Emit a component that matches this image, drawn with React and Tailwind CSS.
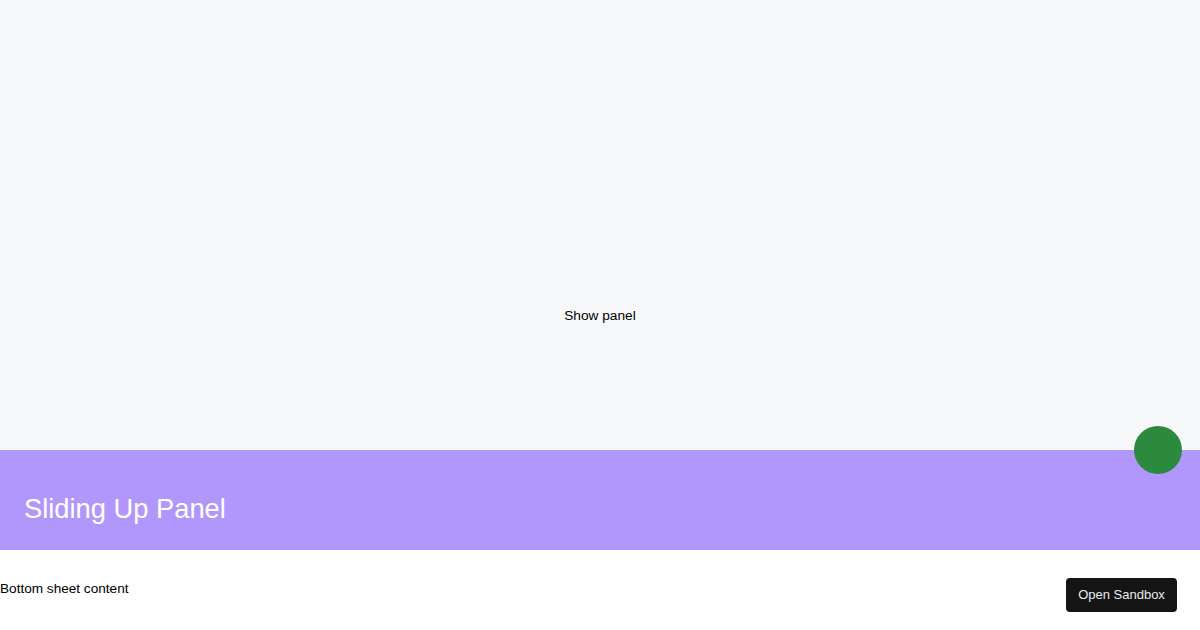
export default function App() {
  return (
    <div className="relative h-screen w-full overflow-hidden bg-[#f8f9fa] font-['Liberation_Sans',Arial,sans-serif] text-black">
      {/* main content */}
      <div className="flex h-full items-center justify-center">
        <button className="mt-[2px] text-[13.7px] leading-4">Show panel</button>
      </div>

      {/* sliding panel */}
      <div className="absolute inset-x-0 bottom-0 h-[180px] bg-white">
        <div className="relative flex h-[100px] items-center bg-[#b197fc] px-6 pt-[17px]">
          <h1 className="text-[27.3px] leading-8 text-white">Sliding Up Panel</h1>
          <div className="absolute right-[18px] top-[-24px] h-12 w-12 rounded-full bg-[#2b8a3e]" />
        </div>
        <div className="flex items-start justify-between pt-[31px] pr-[23px]">
          <p className="text-[13.6px] leading-4">Bottom sheet content</p>
          <button className="-mt-[3px] h-[34px] w-[111px] rounded-[4px] bg-[#141414] text-[13px] text-[#e9ecef]">
            Open Sandbox
          </button>
        </div>
      </div>
    </div>
  );
}
